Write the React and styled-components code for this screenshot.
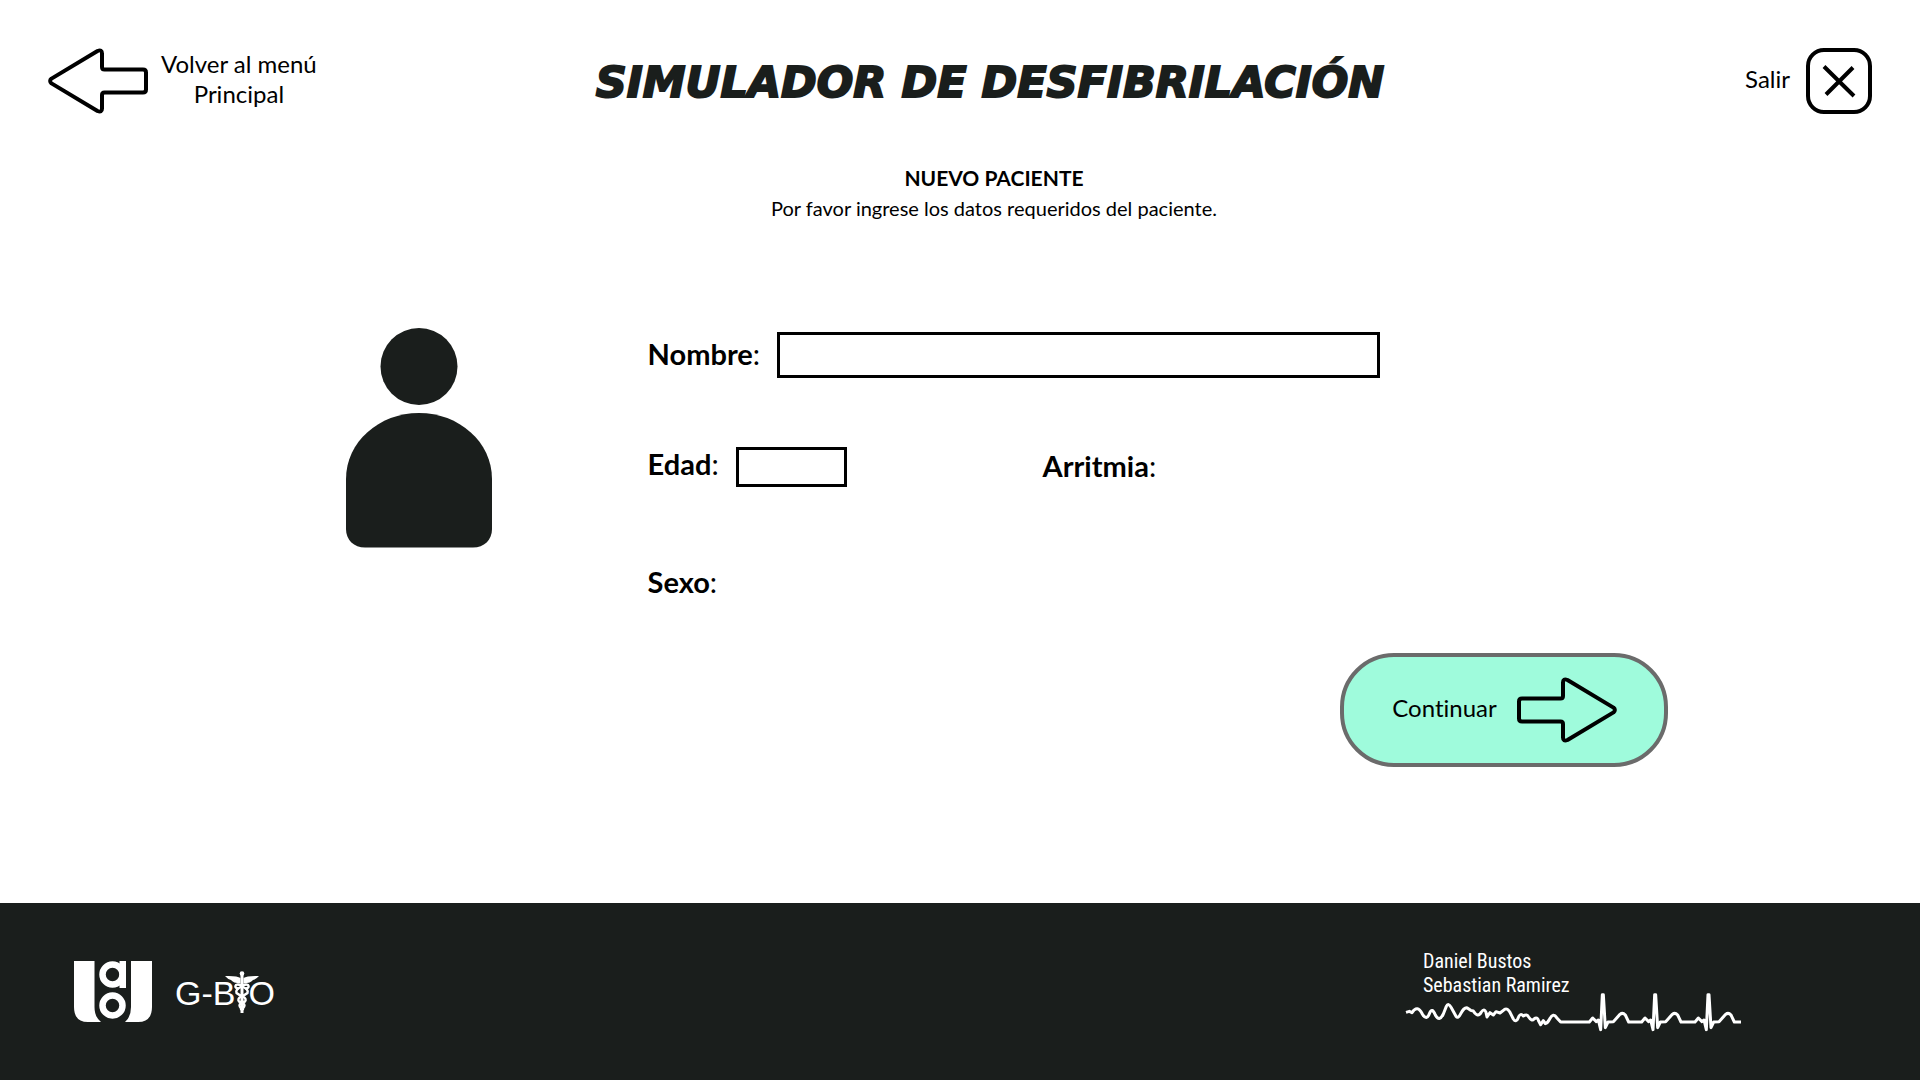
import React from 'react';
import styled, { createGlobalStyle } from 'styled-components';

const ink = '#1a1e1c';

const GlobalStyle = createGlobalStyle`
  *, *::before, *::after { box-sizing: border-box; }
  body {
    margin: 0;
    background: #fff;
    color: #000;
    font-family: Lato, "Noto Sans", sans-serif;
    font-variant-ligatures: none;
  }
`;

const Page = styled.div`
  min-height: 100vh;
  display: flex;
  flex-direction: column;
`;

const Header = styled.header`
  display: grid;
  grid-template-columns: 300px 1fr 240px;
  align-items: center;
  padding: 48px 48px 0;
`;

const NavButton = styled.button`
  display: flex;
  align-items: center;
  justify-self: ${p => p.$side};
  gap: ${p => p.$gap}px;
  padding: 0;
  border: 0;
  background: none;
  color: inherit;
  font: inherit;
  font-size: 24px;
  font-variant-ligatures: none;
  line-height: 30px;
  text-align: center;
  cursor: pointer;
`;

const ButtonText = styled.span`
  padding-bottom: 4px;
`;

const Title = styled.h1`
  margin: 0;
  padding-top: 2px;
  color: ${ink};
  font-family: "DejaVu Sans", sans-serif;
  font-size: 43px;
  font-style: italic;
  font-weight: 700;
  line-height: 60px;
  text-align: center;
  white-space: nowrap;
  -webkit-text-stroke: 2px ${ink};
`;

const CloseFrame = styled.span`
  display: grid;
  place-items: center;
  width: 66px;
  height: 66px;
  border: 4px solid #000;
  border-radius: 18px;
`;

const Intro = styled.section`
  padding: 49px 0 0 68px;
  text-align: center;
  line-height: 30px;
`;

const IntroTitle = styled.h2`
  margin: 0;
  font-size: 21px;
  font-weight: 700;
  line-height: 30px;
`;

const IntroText = styled.p`
  margin: 0;
  font-size: 20px;
`;

const Main = styled.main`
  flex: 1;
  display: flex;
  flex-direction: column;
  padding: 105px 13.1% 48px 18%;
`;

const Patient = styled.div`
  display: flex;
  align-items: flex-start;
  gap: 156px;
`;

const Form = styled.form`
  flex: 0 1 732px;
  display: flex;
  flex-direction: column;
  padding-top: 4px;
`;

const FieldRow = styled.div`
  display: flex;
  align-items: ${p => p.$align || 'center'};
  gap: 17px;
`;

const SplitRow = styled.div`
  display: grid;
  grid-template-columns: 395px 1fr;
  align-items: center;
  margin: 69px 0 78px;
`;

const Label = styled.label`
  font-size: 29px;
  font-weight: 700;
  line-height: 34px;
  padding-bottom: 2px;
`;

const Colon = styled.span`
  font-weight: 400;
`;

const TextInput = styled.input`
  flex: ${p => (p.$width ? 'none' : 1)};
  width: ${p => (p.$width ? `${p.$width}px` : 'auto')};
  min-width: 0;
  height: ${p => p.$height}px;
  padding: 0 10px;
  border: 3px solid #000;
  border-radius: 0;
  background: #fff;
  font: inherit;
  font-size: 24px;
`;

const Continue = styled.button`
  align-self: flex-end;
  display: flex;
  align-items: center;
  justify-content: center;
  gap: 20px;
  width: 328px;
  height: 114px;
  margin-top: 52px;
  border: 4px solid #6b6b6b;
  border-radius: 54px;
  background: #9ffbdc;
  color: #000;
  font: inherit;
  font-size: 24px;
  font-variant-ligatures: none;
  line-height: 30px;
  cursor: pointer;
`;

const Footer = styled.footer`
  display: flex;
  align-items: center;
  justify-content: space-between;
  min-height: 177px;
  padding: 0 178px 0 74px;
  background: ${ink};
  color: #fff;
`;

const Logos = styled.div`
  display: flex;
  align-items: center;
  gap: 23px;
`;

const Wordmark = styled.div`
  display: flex;
  align-items: center;
  padding-top: 2px;
  font-family: "Liberation Sans", Arial, sans-serif;
  font-size: 34px;
  line-height: 40px;
`;

const StaffSlot = styled.span`
  display: flex;
  justify-content: center;
  width: 13px;
  height: 44px;

  svg { flex: none; }
`;

const Credits = styled.div`
  display: flex;
  flex-direction: column;
`;

const Authors = styled.p`
  margin: 0 0 -5px;
  padding-left: 18px;
  font-family: "Roboto Condensed", Roboto, sans-serif;
  font-size: 20px;
  line-height: 24px;
`;

function Arrow({ right }) {
  return (
    <svg width="100" height="66" viewBox="0 0 100 66" fill="none" stroke="#000" strokeWidth="4" strokeLinejoin="round" aria-hidden="true">
      <path
        transform={right ? 'translate(100 0) scale(-1 1)' : undefined}
        d="M3.5 30.6 L49.5 3 Q54 1 54 5.5 V19 Q54 21.5 56.5 21.5 H95 Q98 21.5 98 24.5 V41.5 Q98 44.5 95 44.5 H56.5 Q54 44.5 54 47 V60.5 Q54 65 49.5 63 L3.5 35.4 Q0.8 33 3.5 30.6 Z"
      />
    </svg>
  );
}

function PersonIcon() {
  return (
    <svg width="146" height="220" viewBox="0 0 146 220" fill={ink} aria-hidden="true">
      <circle cx="73" cy="38.5" r="38.5" />
      <path d="M0 151 C0 114 33 85 73 85 C113 85 146 114 146 151 V201 C146 212 138 219.5 127 219.5 H19 C8 219.5 0 212 0 201 Z" />
    </svg>
  );
}

function UaoLogo() {
  return (
    <svg width="78" height="62" viewBox="0 0 78 62" fill="#fff" role="img" aria-label="UAO">
      <path d="M0 0 H20.5 V46 Q20.5 56 27 61 H14 Q0 61 0 46 Z" />
      <path d="M78 0 H57 V46 Q57 56 51 61 H64 Q78 61 78 46 Z" />
      <g fill="none" stroke="#fff">
        <circle cx="38.5" cy="13.5" r="10" strokeWidth="6.5" />
        <circle cx="38.5" cy="44.5" r="10" strokeWidth="6.5" />
      </g>
      <path d="M45.5 0 H52 V27 H45.5 Z" />
    </svg>
  );
}

function Caduceus() {
  return (
    <svg width="34" height="44" viewBox="0 0 34 44" aria-hidden="true">
      <path fill="#fff" d="M15.5 7 Q12 4.5 0 5 Q2.500 8 6 9 Q8 12 15.5 12.5 Z M18.5 7 Q22 4.5 34 5 Q31.500 8 28 9 Q26 12 18.5 12.5 Z" />
      <circle cx="17" cy="2.5" r="2.3" fill="#fff" />
      <path stroke="#fff" strokeWidth="3" d="M17 2 V42" />
      <g fill="none" stroke="#fff" strokeWidth="2.4" strokeLinecap="round">
        <path d="M13 17.5 Q9 16.5 11 14 Q14 12.5 17 15.5 Q24 18.5 22.500 22 Q20 24 16 25.5 Q12 28 14 30.5 Q19.500 32 19.500 34.5 Q19 37 16 38" />
        <path d="M21 17.5 Q25 16.5 23 14 Q20 12.5 17 15.5 Q10 18.5 11.500 22 Q14 24 18 25.5 Q22 28 20 30.5 Q14.500 32 14.5 34.5 Q15 37 18 38" />
      </g>
    </svg>
  );
}

const beat = x =>
  `L${x - 40} 249 L${x - 30} 237 L${x - 19} 248 L${x - 13} 243 L${x - 6} 272 L${x - 1} 167 L${x + 2} 167 L${x + 8} 266 L${x + 16} 249 L${x + 32} 248 L${x + 52} 226 Q${x + 60} 219 ${x + 68} 228 L${x + 78} 249`;

const tremor =
  'M48 220 L58 217 L66 221 Q82 196 97 225 Q110 248 119 222 Q126 204 136 228 Q148 250 160 225 L169 202 Q175 190 184 206 L198 232 Q204 240 211 226 Q222 204 232 207 L242 214 L250 216 Q264 238 274 219 Q283 206 288 220 L291 234 L300 221 L310 228 L318 218 L330 222 L344 211 Q352 206 360 220 L370 240 Q378 252 384 238 Q390 220 400 231 Q410 224 416 234 Q425 248 432 240 Q442 232 446 246 L452 257 L460 245 L466 254 Q473 252 479 240 Q490 220 500 236 L512 249';

function HeartTrace() {
  return (
    <svg width="337" height="42" viewBox="45 159 1011 126" fill="none" stroke="#fff" strokeWidth="9" strokeLinejoin="round" aria-hidden="true">
      <path d={`${tremor} ${beat(638)} ${beat(795)} ${beat(955)} L1053 249`} />
    </svg>
  );
}

export default function App() {
  return (
    <Page>
      <GlobalStyle />
      <Header>
        <NavButton type="button" $side="start" $gap={13}>
          <Arrow />
          <ButtonText>Volver al menú<br />Principal</ButtonText>
        </NavButton>
        <Title>SIMULADOR DE DESFIBRILACIÓN</Title>
        <NavButton type="button" $side="end" $gap={16}>
          <ButtonText>Salir</ButtonText>
          <CloseFrame>
            <svg width="34" height="34" viewBox="0 0 34 34" stroke="#000" strokeWidth="4" aria-hidden="true">
              <path d="M2 2.5 L32 32 M31 3.5 L4 30.5" />
            </svg>
          </CloseFrame>
        </NavButton>
      </Header>

      <Intro>
        <IntroTitle>NUEVO PACIENTE</IntroTitle>
        <IntroText>Por favor ingrese los datos requeridos del paciente.</IntroText>
      </Intro>

      <Main>
        <Patient>
          <PersonIcon />
          <Form id="paciente" onSubmit={e => e.preventDefault()}>
            <FieldRow>
              <Label htmlFor="nombre">Nombre<Colon>:</Colon></Label>
              <TextInput id="nombre" type="text" $height={46} />
            </FieldRow>
            <SplitRow>
              <FieldRow $align="flex-start">
                <Label htmlFor="edad">Edad<Colon>:</Colon></Label>
                <TextInput id="edad" type="text" inputMode="numeric" $width={111} $height={40} />
              </FieldRow>
              <Label as="span">Arritmia<Colon>:</Colon></Label>
            </SplitRow>
            <Label as="span">Sexo<Colon>:</Colon></Label>
          </Form>
        </Patient>
        <Continue type="submit" form="paciente">
          <ButtonText>Continuar</ButtonText>
          <Arrow right />
        </Continue>
      </Main>

      <Footer>
        <Logos>
          <UaoLogo />
          <Wordmark>
            <span>G-B</span>
            <StaffSlot><Caduceus /></StaffSlot>
            <span>O</span>
          </Wordmark>
        </Logos>
        <Credits>
          <Authors>Daniel Bustos<br />Sebastian Ramirez</Authors>
          <HeartTrace />
        </Credits>
      </Footer>
    </Page>
  );
}
